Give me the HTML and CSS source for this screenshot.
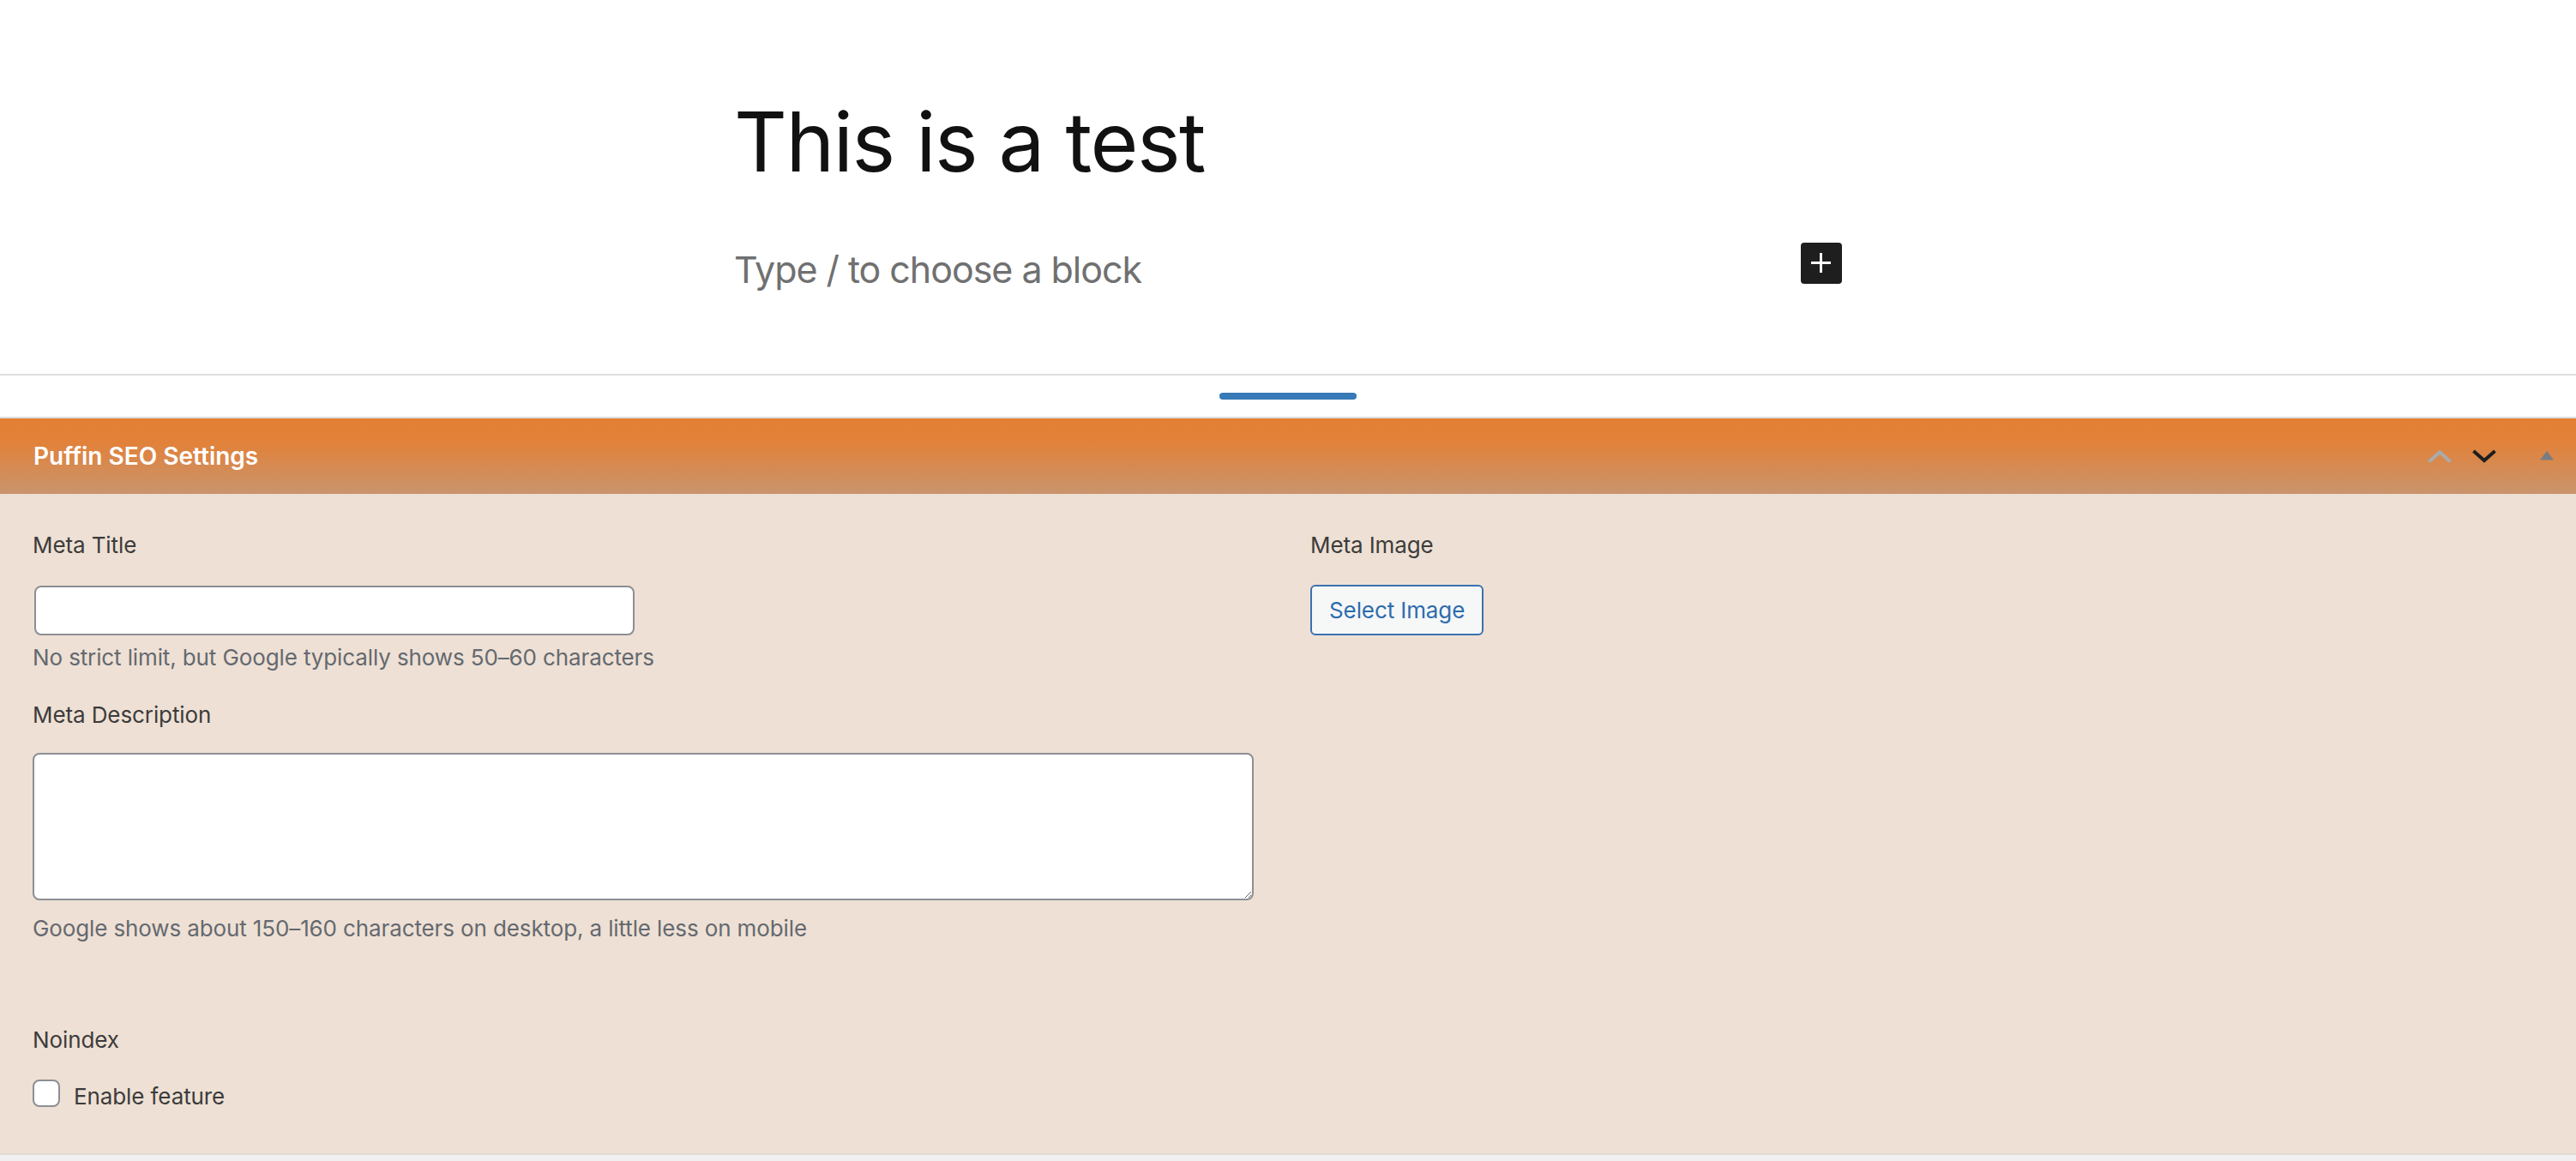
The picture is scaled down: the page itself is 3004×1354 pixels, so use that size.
FILE: index.html
```html
<!DOCTYPE html>
<html lang="en">
<head>
<meta charset="utf-8">
<title>Edit Post</title>
<link rel="stylesheet" href="styles.css">
</head>
<body>
<div class="editor">
  <div class="canvas">
    <h1 class="post-title">This is a test</h1>
    <div class="block-row">
      <p class="placeholder">Type / to choose a block</p>
      <button class="inserter" aria-label="Add block">
        <svg viewBox="0 0 24 24" width="48" height="48"><path d="M11 12.5V17.5H12.5V12.5H17.5V11H12.5V6H11V11H6V12.5H11Z" fill="#fff"/></svg>
      </button>
    </div>
  </div>
</div>
<div class="resize-strip"><span class="resize-handle"></span></div>
<section class="metabox">
  <header class="metabox-header">
    <h2 class="metabox-title">Puffin SEO Settings</h2>
    <div class="metabox-actions">
      <span class="ctl up">
        <svg viewBox="0 0 28 16" width="28" height="16"><path d="M1.5 14.5 L14 3.5 L26.5 14.5" fill="none" stroke="#a9abab" stroke-width="4"/></svg>
      </span>
      <span class="ctl down">
        <svg viewBox="0 0 28 16" width="28" height="16"><path d="M1.5 2 L14 13 L26.5 2" fill="none" stroke="#1e1e1e" stroke-width="4"/></svg>
      </span>
      <span class="ctl toggle">
        <svg viewBox="0 0 18 12" width="18" height="12"><path d="M1 11.5 L9 1 L17 11.5 Z" fill="#787c82"/></svg>
      </span>
    </div>
  </header>
  <div class="metabox-body">
    <div class="col col-left">
      <label class="field-label lbl-title">Meta Title</label>
      <input class="text-input" type="text">
      <p class="help help-title">No strict limit, but Google typically shows 50–60 characters</p>
      <label class="field-label lbl-desc">Meta Description</label>
      <textarea class="textarea"></textarea>
      <p class="help help-desc">Google shows about 150–160 characters on desktop, a little less on mobile</p>
      <label class="field-label lbl-noindex">Noindex</label>
      <div class="check-row">
        <input type="checkbox" class="checkbox">
        <span class="check-text">Enable feature</span>
      </div>
    </div>
    <div class="col col-right">
      <label class="field-label lbl-title">Meta Image</label>
      <button class="select-btn">Select Image</button>
    </div>
  </div>
</section>
<div class="footer-strip"></div>
</body>
</html>
```

FILE: styles.css
```css
html, body {
  margin: 0;
  padding: 0;
  background: #ffffff;
}
body {
  font-family: "Inter", "Liberation Sans", sans-serif;
}
.editor {
  height: 436px;
  border-bottom: 2px solid #dedede;
  background: #fff;
}
.canvas {
  width: 1292px;
  margin: 0 auto;
  padding-top: 108px;
}
.post-title {
  margin: 0;
  font-family: "Inter", sans-serif;
  font-weight: 400;
  font-size: 96px;
  line-height: 115px;
  letter-spacing: -1.5px;
  color: #111111;
}
.block-row {
  display: flex;
  justify-content: space-between;
  align-items: flex-start;
  margin-top: 59px;
}
.placeholder {
  margin: 0;
  font-family: "Inter", sans-serif;
  font-size: 43px;
  line-height: 64px;
  letter-spacing: -1.05px;
  color: #707070;
}
.inserter {
  width: 48px;
  height: 48px;
  margin-top: 1px;
  padding: 0;
  border: none;
  border-radius: 4px;
  background: #1e1e1e;
  display: flex;
  align-items: center;
  justify-content: center;
}
.inserter svg { display: block; }
.resize-strip {
  height: 48px;
  display: flex;
  justify-content: center;
  align-items: flex-start;
  border-bottom: 2px solid #dcdcde;
  background: #fff;
}
.resize-handle {
  width: 160px;
  height: 8px;
  margin-top: 20px;
  border-radius: 4px;
  background: #3879b7;
}
.metabox-header {
  height: 88px;
  display: flex;
  align-items: center;
  justify-content: space-between;
  padding: 0 25px 0 39px;
  background: linear-gradient(to bottom, #e38034 0%, #e28139 30%, #c9946c 100%);
}
.metabox-title {
  margin: 0;
  font-size: 28px;
  font-weight: 600;
  color: #ffffff;
  line-height: 36px;
}
.metabox-actions {
  display: flex;
  align-items: center;
}
.ctl { display: flex; align-items: center; }
.ctl svg { display: block; }
.ctl.down { margin-left: 24px; }
.ctl.toggle { margin-left: 50px; margin-top: -2px; }
.metabox-body {
  display: grid;
  grid-template-columns: 1424px 1fr;
  column-gap: 66px;
  padding: 42px 38px 48px 38px;
  background: #eee0d4;
  border-bottom: 2px solid #e2dcd6;
}
.col { display: flex; flex-direction: column; align-items: flex-start; }
.field-label {
  display: block;
  font-size: 26px;
  line-height: 36px;
  letter-spacing: -0.1px;
  color: #3c3c3c;
}
.text-input {
  box-sizing: border-box;
  width: 700px;
  height: 58px;
  margin: 29px 0 0 2px;
  border: 2px solid #8c8f94;
  border-radius: 8px;
  background: #fff;
  font-size: 26px;
  padding: 0 16px;
}
.help {
  margin: 0;
  font-size: 26px;
  line-height: 36px;
  letter-spacing: -0.12px;
  color: #646970;
}
.help-title { margin-top: 8px; }
.lbl-desc { margin-top: 31px; }
.textarea {
  display: block;
  box-sizing: border-box;
  width: 1424px;
  height: 172px;
  margin-top: 26px;
  border: 2px solid #8c8f94;
  border-radius: 8px;
  background: #fff;
  font-size: 26px;
}
.help-desc { margin-top: 15px; }
.lbl-noindex { margin-top: 94px; }
.check-row {
  display: flex;
  align-items: flex-start;
  margin-top: 28px;
}
.checkbox {
  appearance: none;
  -webkit-appearance: none;
  box-sizing: border-box;
  width: 32px;
  height: 32px;
  margin: 0;
  border: 2px solid #8c8f94;
  border-radius: 8px;
  background: #fff;
}
.check-text {
  margin-left: 16px;
  padding-top: 2px;
  font-size: 26px;
  line-height: 36px;
  letter-spacing: -0.1px;
  color: #3c3c3c;
}
.select-btn {
  box-sizing: border-box;
  height: 59px;
  margin-top: 28px;
  padding: 0 20px;
  border: 2px solid #3a72b0;
  border-radius: 6px;
  background: #f6f7f7;
  color: #2d6cae;
  font-family: "Inter", sans-serif;
  font-size: 26px;
  letter-spacing: -0.1px;
  line-height: 55px;
}
.footer-strip {
  height: 20px;
  background: #f0f0f0;
}
```
